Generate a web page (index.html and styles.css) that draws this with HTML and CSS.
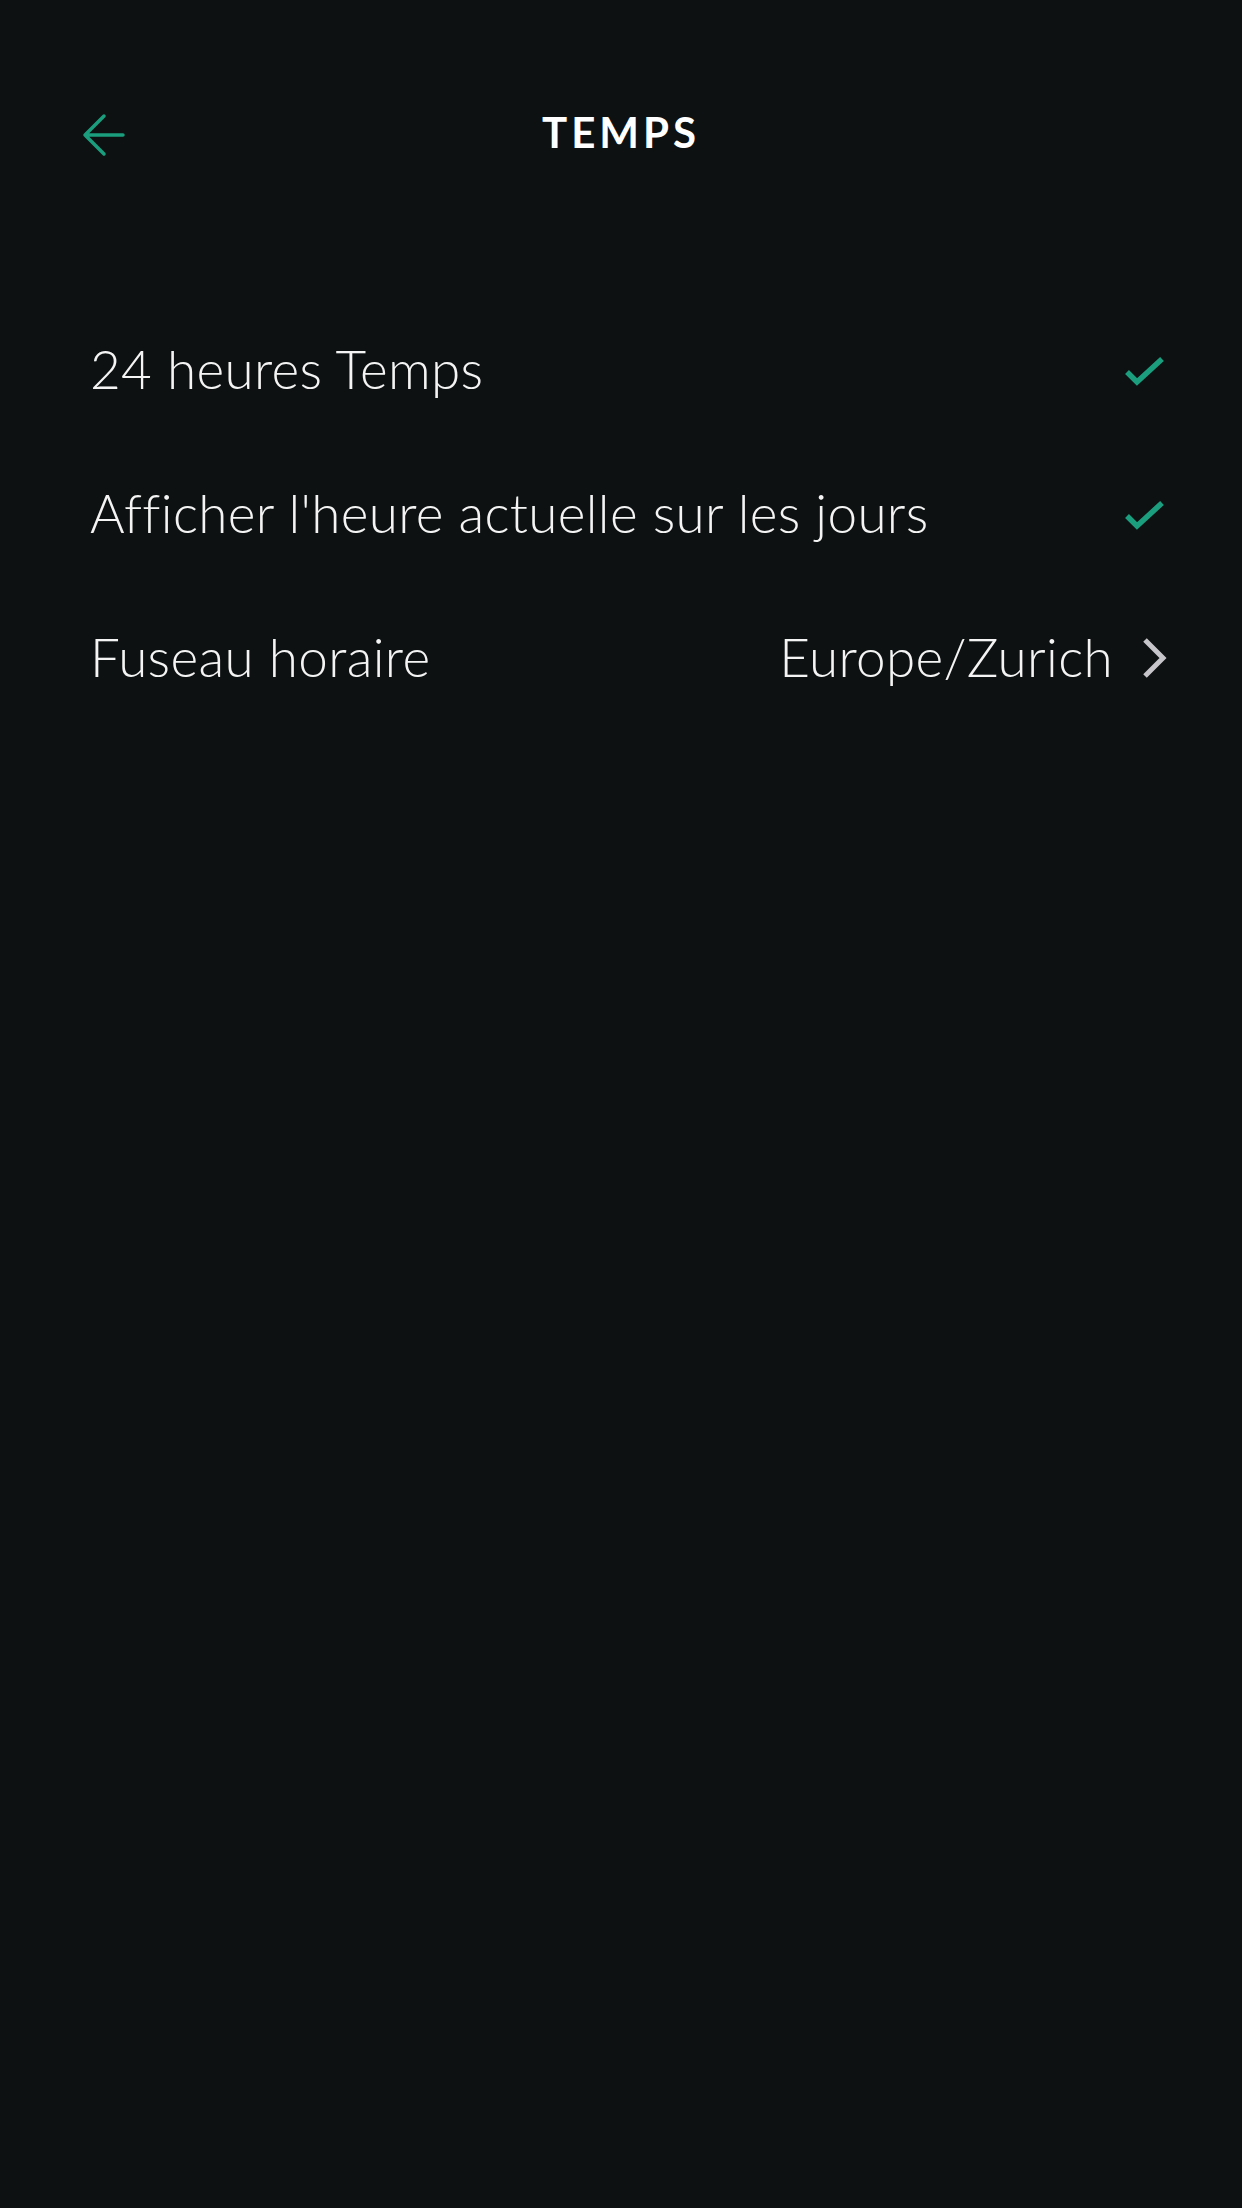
FILE: index.html
```html
<!DOCTYPE html>
<html>
<head>
  <meta charset="utf-8">
  <title>Temps</title>
  <link rel="stylesheet" href="styles.css">
</head>
<body>
  <div class="screen">
    <div class="header">
      <a class="back" href="#">
        <svg width="44" height="44" viewBox="0 0 44 44">
          <path d="M3 22 L22 3 M3 22 L22 41 M3 22 H41" fill="none" stroke="#1b9e7e" stroke-width="3.5" stroke-linecap="round" stroke-linejoin="round"/>
        </svg>
      </a>
      <h1>TEMPS</h1>
    </div>

    <div class="settings">
      <div class="row">
        <span class="label">24 heures Temps</span>
        <svg class="check" width="40" height="32" viewBox="0 0 40 32">
          <path d="M2 17 L12 27 L37 4" fill="none" stroke="#1b9e7e" stroke-width="5.5"/>
        </svg>
      </div>
      <div class="row">
        <span class="label">Afficher l'heure actuelle sur les jours</span>
        <svg class="check" width="40" height="32" viewBox="0 0 40 32">
          <path d="M2 17 L12 27 L37 4" fill="none" stroke="#1b9e7e" stroke-width="5.5"/>
        </svg>
      </div>
      <div class="row">
        <span class="label">Fuseau horaire</span>
        <span class="value">
          Europe/Zurich
          <svg class="chevron" width="28" height="42" viewBox="0 0 28 42">
            <path d="M4 3 L22 21 L4 39" fill="none" stroke="#c6c6ca" stroke-width="5"/>
          </svg>
        </span>
      </div>
    </div>
  </div>
</body>
</html>
```

FILE: styles.css
```css
body {
  margin: 0;
  background-color: #0d1112;
  font-family: Lato, "Open Sans", sans-serif;
  color: #f4f4f4;
}
.screen {
  min-height: 2208px;
  background-color: #0d1112;
}
.header {
  position: relative;
  display: flex;
  justify-content: center;
  align-items: center;
  height: 100px;
  margin-top: 82px;
}
.back {
  position: absolute;
  left: 82px;
  top: 31px;
  display: block;
  width: 44px;
  height: 44px;
}
.back svg {
  display: block;
}
.header h1 {
  margin: 0;
  font-size: 42px;
  font-weight: 700;
  letter-spacing: 4px;
  color: #ffffff;
}
.settings {
  margin-top: 114px;
  padding: 0 77px 0 90px;
}
.row {
  display: flex;
  justify-content: space-between;
  align-items: center;
  height: 144px;
}
.label, .value {
  font-size: 53px;
  font-weight: 300;
  letter-spacing: 0.35px;
  color: #f4f4f4;
}
.value {
  display: flex;
  align-items: center;
  gap: 28px;
}
.check {
  display: block;
  margin-top: 6px;
}
.chevron {
  display: block;
  margin-right: -4px;
  margin-top: 3px;
}
```
